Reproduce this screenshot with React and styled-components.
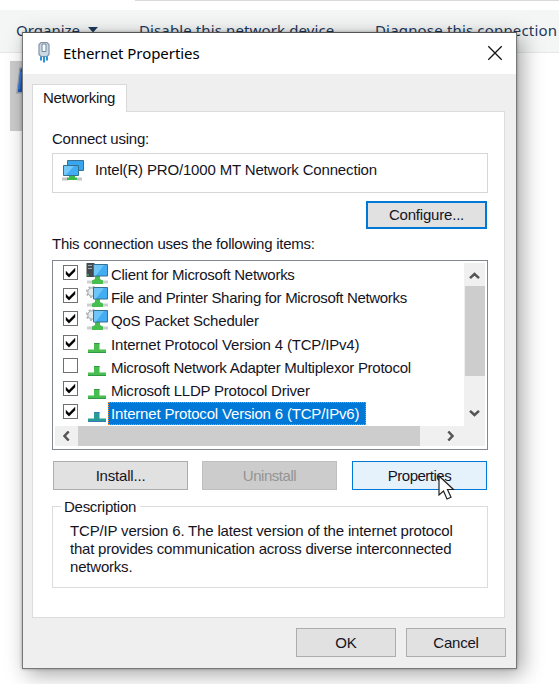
import React from 'react';
import styled, { createGlobalStyle } from 'styled-components';

const Global = createGlobalStyle`
  * { box-sizing: border-box; }
  body { margin: 0; background: #fff; overflow: hidden; }
  svg { display: block; flex: none; }
`;

const Desktop = styled.main`
  position: relative;
  width: 559px;
  height: 684px;
  overflow: hidden;
  background: #fff;
  font: 15px/20px "Liberation Sans", Arial, sans-serif;
  color: #14141f;
`;

const AddressEdge = styled.div`
  height: 10px;
  margin-left: 135px;
  border-top: 1px solid #d9d9d9;
`;

const CommandBar = styled.div`
  display: flex;
  align-items: center;
  height: 43px;
  padding: 0 0 3px 16px;
  background: #f4f6f6;
  border-bottom: 1px solid #e6e8e8;
  font: 15px/20px "Noto Sans", "Open Sans", sans-serif;
  color: #1e395b;
  white-space: nowrap;
`;

const Command = styled.span`
  display: flex;
  align-items: center;
  gap: 8px;
  flex: none;
  width: ${p => p.$w}px;
  letter-spacing: ${p => p.$ls || 0}px;
`;

const SelectedConnection = styled.div`
  width: 60px;
  height: 70px;
  margin: 8px 0 0 10px;
  padding: 6px;
  background: #ccc;
`;

const Dialog = styled.section`
  position: absolute;
  left: 22px;
  top: 32px;
  width: 495px;
  height: 637px;
  display: flex;
  flex-direction: column;
  background: #efefef;
  border: 1px solid #777;
  border-top-color: #555;
  box-shadow: 5px 5px 20px rgba(0, 0, 0, 0.36), 0 0 3px rgba(0, 0, 0, 0.3);
`;

const TitleBar = styled.header`
  display: flex;
  align-items: center;
  height: 41px;
  padding: 0 13px 2px 14px;
  background: #fff;
`;

const Title = styled.h1`
  flex: 1;
  margin: 0 0 0 10px;
  font: 15px/20px "Noto Sans", "Open Sans", sans-serif;
  color: #000;
  letter-spacing: -0.05px;
`;

const Tab = styled.div`
  position: relative;
  width: 95px;
  height: 28px;
  margin: 10px 0 -1px 9px;
  padding: 3px 0 0 10px;
  background: #fff;
  border: 1px solid #d9d9d9;
  border-bottom: 0;
`;

const Panel = styled.div`
  height: 507px;
  margin: 0 11px 0 9px;
  padding: 17px 15px 0 19px;
  background: #fff;
  border: 1px solid #dcdcdc;
`;

const Text = styled.span`
  white-space: nowrap;
  letter-spacing: ${p => p.$ls || 0}px;
`;

const Caption = styled.div`
  height: 20px;
  margin-top: ${p => p.$top || 0}px;
`;

const DeviceBox = styled.div`
  display: flex;
  gap: 11px;
  width: 436px;
  height: 40px;
  margin-top: 4px;
  padding: 6px 9px;
  border: 1px solid #d6d6d6;
`;

const Button = styled.button`
  display: flex;
  align-items: center;
  justify-content: center;
  width: ${p => p.$w}px;
  height: ${p => p.$h || 29}px;
  padding: 0;
  font: inherit;
  color: ${p => (p.disabled ? '#949494' : '#14141f')};
  background: ${p => (p.disabled ? '#cccccc' : p.$hot ? '#e5f1fb' : '#e1e1e1')};
  border: ${p => (p.$focus ? '2px solid #0078d7' : p.$hot ? '1px solid #0078d7' : p.disabled ? '1px solid #bfbfbf' : '1px solid #adadad')};
`;

const ConfigureRow = styled.div`
  display: flex;
  justify-content: flex-end;
  margin: 8px 2px 0 0;
`;

const ListBox = styled.div`
  display: grid;
  grid-template-columns: 1fr 21px;
  grid-template-rows: 163px 20px;
  width: 436px;
  height: 190px;
  margin-top: 6px;
  padding: 2px;
  border: 1px solid #828790;
`;

const Items = styled.div`
  display: flex;
  flex-direction: column;
`;

const Row = styled.div`
  display: flex;
  align-items: center;
  height: 23.2px;
  padding-left: 8px;
`;

const Check = styled.span`
  display: flex;
  align-items: center;
  justify-content: center;
  width: 15px;
  height: 15px;
  margin: 0 8px 4px 0;
  border: 1px solid #707070;
  background: #fff;
`;

const ItemLabel = styled(Text)`
  height: 23px;
  line-height: 23px;
  padding: 0 ${p => (p.$selected ? 7 : 0)}px 0 3px;
  color: ${p => (p.$selected ? '#fff' : 'inherit')};
  background: ${p => (p.$selected ? '#0078d7' : 'transparent')};
  outline: ${p => (p.$selected ? '1px dotted #ff8728' : 'none')};
  outline-offset: -1px;
`;

const VScroll = styled.div`
  display: flex;
  flex-direction: column;
  align-items: center;
  justify-content: space-between;
  background: #f0f0f0;
  padding: 8px 0;
`;

const VThumb = styled.div`
  width: 20px;
  height: 90px;
  margin: 0 0 28px;
  background: #cdcdcd;
`;

const HScroll = styled.div`
  grid-column: 1 / 3;
  display: flex;
  align-items: center;
  background: #f0f0f0;
  padding-left: 6px;
`;

const HThumb = styled.div`
  width: 342px;
  height: 20px;
  margin: 0 25px 0 6px;
  background: #cdcdcd;
`;

const ActionRow = styled.div`
  display: flex;
  gap: 14px;
  margin: 11px 0 0 1px;

  & > :last-child {
    margin-left: 1px;
  }
`;

const Group = styled.fieldset`
  width: 436px;
  height: 91px;
  margin: 7px 0 0;
  padding: 6px 0 0 17px;
  border: 1px solid #dcdcdc;
  line-height: 18px;
`;

const Legend = styled.legend`
  margin-left: -9px;
  padding: 0 4px 0 3px;
  line-height: 19px;
`;

const Line = styled.div`
  height: 18px;
`;

const Footer = styled.footer`
  display: flex;
  justify-content: flex-end;
  gap: 10px;
  padding: 10px 10px 0 0;
`;

const Pointer = styled.svg`
  position: absolute;
  left: 437px;
  top: 474px;
`;

const Plug = () => (
  <svg width="16" height="23" viewBox="0 0 16 23">
    <path d="M4 1.500h6l2 2v10l-2 2H4l-2-2v-10z" fill="#cbd9e6" stroke="#8494a6" strokeWidth="1.200" />
    <path d="M5 3h4v7.500H5z" fill="#f5fafc" stroke="#74879c" />
    <path d="M4 15.500v4M7 15.500v6M10 15.500v4" stroke="#258ed2" strokeWidth="1.900" />
  </svg>
);

const Close = () => (
  <svg width="16" height="16" viewBox="0 0 16 16">
    <path d="M1.300 1.300l13.400 13.400M14.700 1.300L1.300 14.700" stroke="#151515" strokeWidth="1.300" />
  </svg>
);

const Adapter = () => (
  <svg width="22" height="22" viewBox="0 0 22 22">
    <path d="M5.500.5h16v10h-16z" fill="#38a6ef" stroke="#39718e" />
    <path d="M0 19h6M15 19h5" stroke="#c3c7c9" strokeWidth="3" />
    <path d="M7 15h6v2.500h2V20H5v-2.500h2z" fill="#3cba49" />
    <path d="M1.500 5.500h15v10h-15z" fill="#43adf3" stroke="#32718f" />
    <path d="M2 6h10L4 15H2z" fill="#74c8fa" />
  </svg>
);

const ItemIcon = ({ kind }) => {
  const base = kind === 'selected' ? '#299b96' : '#48bd50';
  const edge = kind === 'selected' ? '#367bb5' : '#2f9a45';
  const full = kind === 'server' || kind === 'gear';
  return (
    <svg width="22" height="23" viewBox="0 0 22 23">
      {kind === 'server' && (
        <g>
          <path d="M.5 0h8v14h-8z" fill="#424a50" />
          <path d="M2 2.500h4M2 5.500h4" stroke="#a1abb0" />
          <path d="M1 12h2" stroke="#56d45b" />
        </g>
      )}
      {kind === 'gear' && (
        <g>
          <circle cx="6" cy="6" r="4.200" fill="#e6eaed" stroke="#98a3aa" />
          <circle cx="6" cy="6" r="5.300" fill="none" stroke="#a5adb2" strokeWidth="1.600" strokeDasharray="2 2.160" />
        </g>
      )}
      {full ? (
        <g>
          <path d="M1 19h21" stroke="#cccfd0" strokeWidth="3" />
          <path d="M9 13h5v3l3 1.500V21H6v-3.500L9 16z" fill={base} />
          <path d="M7.500 1.500h14v11.500h-14z" fill="#42adf3" stroke="#376f90" />
          <path d="M8 2h10l-8 10.500H8z" fill="#6dc5f8" />
        </g>
      ) : (
        <g>
          <path d="M8 10h5.500v6.500H20V20H2v-3.500h6z" fill={base} />
          <path d="M2 19.500h18M8 10.500h5.500" stroke={edge} />
        </g>
      )}
    </svg>
  );
};

const Tick = () => (
  <svg width="13" height="13" viewBox="0 0 13 13">
    <path d="M2 5.200l3 3 6-6v3l-6 6-3-3z" fill="#000" stroke="#000" strokeWidth=".4" />
  </svg>
);

const arrows = { up: 0, right: 90, down: 180, left: 270 };
const Chevron = ({ dir }) => (
  <svg width="11" height="10" viewBox="0 0 11 10">
    <path d="M1 7.200L5.500 3l4.500 4.200" transform={`rotate(${arrows[dir]} 5.5 5)`} fill="none" stroke="#555" strokeWidth="2.500" />
  </svg>
);

const items = [
  { label: 'Client for Microsoft Networks', kind: 'server', on: true, ls: -0.28 },
  { label: 'File and Printer Sharing for Microsoft Networks', kind: 'gear', on: true, ls: -0.32 },
  { label: 'QoS Packet Scheduler', kind: 'gear', on: true, ls: -0.2 },
  { label: 'Internet Protocol Version 4 (TCP/IPv4)', kind: 'plain', on: true, ls: -0.18 },
  { label: 'Microsoft Network Adapter Multiplexor Protocol', kind: 'plain', on: false, ls: -0.26 },
  { label: 'Microsoft LLDP Protocol Driver', kind: 'plain', on: true, ls: -0.23 },
  { label: 'Internet Protocol Version 6 (TCP/IPv6)', kind: 'selected', on: true, ls: -0.18 },
];

export default function App() {
  return (
    <Desktop>
      <Global />
      <AddressEdge />
      <CommandBar>
        <Command $w={123}>
          Organize
          <svg width="10" height="6" viewBox="0 0 10 6"><path d="M0 0h10L5 5.500z" fill="#1e395b" /></svg>
        </Command>
        <Command $w={236} $ls={0.12}>Disable this network device</Command>
        <Command $w={184} $ls={0.17}>Diagnose this connection</Command>
      </CommandBar>
      <SelectedConnection>
        <svg width="16" height="28" viewBox="0 0 16 28">
          <path d="M4 1h12v24L1 26z" fill="#2257b5" stroke="#9ba5ad" strokeWidth="1.500" />
          <path d="M5 5L3 22" stroke="#347be2" strokeWidth="2" />
        </svg>
      </SelectedConnection>

      <Dialog>
        <TitleBar>
          <Plug />
          <Title>Ethernet Properties</Title>
          <Close />
        </TitleBar>
        <Tab><Text $ls={-0.3}>Networking</Text></Tab>
        <Panel>
          <Caption><Text $ls={-0.22}>Connect using:</Text></Caption>
          <DeviceBox>
            <Adapter />
            <Text $ls={-0.16}>Intel(R) PRO/1000 MT Network Connection</Text>
          </DeviceBox>
          <ConfigureRow>
            <Button $w={121} $h={28} $focus><Text $ls={-0.2}>Configure...</Text></Button>
          </ConfigureRow>
          <Caption $top={5}><Text $ls={-0.24}>This connection uses the following items:</Text></Caption>
          <ListBox>
            <Items>
              {items.map(item => (
                <Row key={item.label}>
                  <Check>{item.on && <Tick />}</Check>
                  <ItemIcon kind={item.kind} />
                  <ItemLabel $selected={item.kind === 'selected'} $ls={item.ls}>{item.label}</ItemLabel>
                </Row>
              ))}
            </Items>
            <VScroll>
              <Chevron dir="up" />
              <VThumb />
              <Chevron dir="down" />
            </VScroll>
            <HScroll>
              <Chevron dir="left" />
              <HThumb />
              <Chevron dir="right" />
            </HScroll>
          </ListBox>
          <ActionRow>
            <Button $w={135}><Text $ls={-0.2}>Install...</Text></Button>
            <Button $w={135} disabled><Text $ls={-0.45}>Uninstall</Text></Button>
            <Button $w={135} $hot><Text $ls={-0.5}>Properties</Text></Button>
          </ActionRow>
          <Group>
            <Legend><Text $ls={-0.27}>Description</Text></Legend>
            <Line><Text $ls={-0.17}>TCP/IP version 6. The latest version of the internet protocol</Text></Line>
            <Line><Text $ls={-0.23}>that provides communication across diverse interconnected</Text></Line>
            <Line><Text $ls={-0.2}>networks.</Text></Line>
          </Group>
        </Panel>
        <Footer>
          <Button $w={100}><Text>OK</Text></Button>
          <Button $w={100}><Text $ls={-0.2}>Cancel</Text></Button>
        </Footer>
      </Dialog>
      <Pointer width="19" height="28" viewBox="0 0 19 28">
        <path d="M2 2v19l4.500-4 3.500 8 4-1.800-3.500-7.700h6z" fill="#fff" stroke="#222" strokeWidth="1.200" />
      </Pointer>
    </Desktop>
  );
}
